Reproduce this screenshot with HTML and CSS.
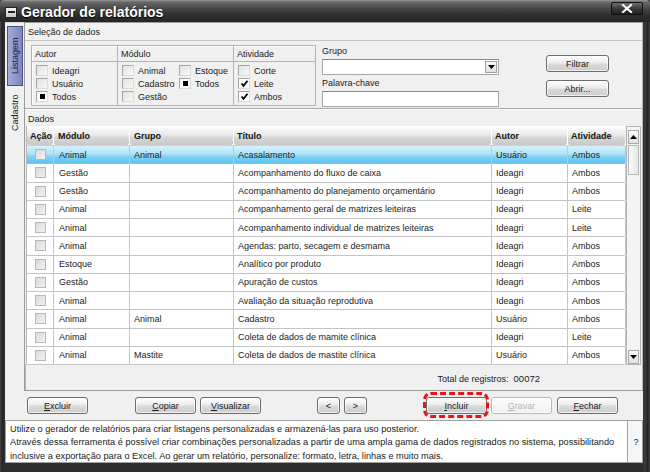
FILE: index.html
```html
<!DOCTYPE html>
<html lang="pt">
<head>
<meta charset="utf-8">
<title>Gerador de relatórios</title>
<link rel="stylesheet" href="styles.css">
</head>
<body>
<div class="window">
  <div class="titlebar">
    <span class="sysicon"><span></span></span>
    <span class="title">Gerador de relatórios</span>
    <span class="close"><svg width="12" height="9" viewBox="0 0 12 9"><path d="M2 1 L10 8 M10 1 L2 8" stroke="#fff" stroke-width="2.2" stroke-linecap="square"/></svg></span>
  </div>
  <div class="frame">
    <div class="upper">
      <div class="tabs">
        <div class="tab active"><span>Listagem</span></div>
        <div class="tab"><span>Cadastro</span></div>
      </div>
      <div class="page">
        <div class="sec-head">Seleção de dados</div>
        <div class="filters">
          <div class="groupbox">
            <div class="ghead">Autor</div>
            <div class="ghead">Módulo</div>
            <div class="ghead">Atividade</div>
            <div class="gbody">
              <div class="opt"><span class="cb"></span>Ideagri</div>
              <div class="opt"><span class="cb"></span>Usuário</div>
              <div class="opt"><span class="cb fill"></span>Todos</div>
            </div>
            <div class="gbody two">
              <div class="opt"><span class="cb"></span>Animal</div>
              <div class="opt"><span class="cb"></span>Estoque</div>
              <div class="opt"><span class="cb"></span>Cadastro</div>
              <div class="opt"><span class="cb fill"></span>Todos</div>
              <div class="opt"><span class="cb"></span>Gestão</div>
            </div>
            <div class="gbody">
              <div class="opt"><span class="cb"></span>Corte</div>
              <div class="opt"><span class="cb on"><svg width="9" height="9" viewBox="0 0 9 9"><path d="M1.5 4.5 L3.5 6.8 L7.5 1.8" fill="none" stroke="#000" stroke-width="1.7"/></svg></span>Leite</div>
              <div class="opt"><span class="cb on"><svg width="9" height="9" viewBox="0 0 9 9"><path d="M1.5 4.5 L3.5 6.8 L7.5 1.8" fill="none" stroke="#000" stroke-width="1.7"/></svg></span>Ambos</div>
            </div>
          </div>
          <div class="fields">
            <div class="flabel">Grupo</div>
            <div class="select"><span class="drop"><svg width="7" height="4" viewBox="0 0 7 4"><path d="M0 0 H7 L3.5 4 Z" fill="#000"/></svg></span></div>
            <div class="flabel">Palavra-chave</div>
            <div class="input"></div>
          </div>
          <div class="fbuttons">
            <span class="btn">Filtrar</span>
            <span class="btn">Abrir...</span>
          </div>
        </div>
        <div class="sec-head2">Dados</div>
        <div class="grid">
          <div class="table">
            <div class="hrow">
              <div class="hc">Ação</div><div class="hc">Módulo</div><div class="hc">Grupo</div><div class="hc">Título</div><div class="hc">Autor</div><div class="hc">Atividade</div>
            </div>
            <div class="row sel"><div class="c ck"><span class="rcb"></span></div><div class="c">Animal</div><div class="c">Animal</div><div class="c">Acasalamento</div><div class="c">Usuário</div><div class="c">Ambos</div></div>
            <div class="row"><div class="c ck"><span class="rcb"></span></div><div class="c">Gestão</div><div class="c"></div><div class="c">Acompanhamento do fluxo de caixa</div><div class="c">Ideagri</div><div class="c">Ambos</div></div>
            <div class="row"><div class="c ck"><span class="rcb"></span></div><div class="c">Gestão</div><div class="c"></div><div class="c">Acompanhamento do planejamento orçamentário</div><div class="c">Ideagri</div><div class="c">Ambos</div></div>
            <div class="row"><div class="c ck"><span class="rcb"></span></div><div class="c">Animal</div><div class="c"></div><div class="c">Acompanhamento geral de matrizes leiteiras</div><div class="c">Ideagri</div><div class="c">Leite</div></div>
            <div class="row"><div class="c ck"><span class="rcb"></span></div><div class="c">Animal</div><div class="c"></div><div class="c">Acompanhamento individual de matrizes leiteiras</div><div class="c">Ideagri</div><div class="c">Leite</div></div>
            <div class="row"><div class="c ck"><span class="rcb"></span></div><div class="c">Animal</div><div class="c"></div><div class="c">Agendas: parto, secagem e desmama</div><div class="c">Ideagri</div><div class="c">Ambos</div></div>
            <div class="row"><div class="c ck"><span class="rcb"></span></div><div class="c">Estoque</div><div class="c"></div><div class="c">Analítico por produto</div><div class="c">Ideagri</div><div class="c">Ambos</div></div>
            <div class="row"><div class="c ck"><span class="rcb"></span></div><div class="c">Gestão</div><div class="c"></div><div class="c">Apuração de custos</div><div class="c">Ideagri</div><div class="c">Ambos</div></div>
            <div class="row"><div class="c ck"><span class="rcb"></span></div><div class="c">Animal</div><div class="c"></div><div class="c">Avaliação da situação reprodutiva</div><div class="c">Ideagri</div><div class="c">Ambos</div></div>
            <div class="row"><div class="c ck"><span class="rcb"></span></div><div class="c">Animal</div><div class="c">Animal</div><div class="c">Cadastro</div><div class="c">Usuário</div><div class="c">Ambos</div></div>
            <div class="row"><div class="c ck"><span class="rcb"></span></div><div class="c">Animal</div><div class="c"></div><div class="c">Coleta de dados de mamite clínica</div><div class="c">Ideagri</div><div class="c">Leite</div></div>
            <div class="row"><div class="c ck"><span class="rcb"></span></div><div class="c">Animal</div><div class="c">Mastite</div><div class="c">Coleta de dados de mastite clínica</div><div class="c">Usuário</div><div class="c">Ambos</div></div>
          </div>
          <div class="vscroll">
            <span class="sbtn"><svg width="7" height="4" viewBox="0 0 7 4"><path d="M0 4 H7 L3.5 0 Z" fill="#000"/></svg></span>
            <span class="thumb"></span>
            <span class="track"></span>
            <span class="sbtn"><svg width="7" height="4" viewBox="0 0 7 4"><path d="M0 0 H7 L3.5 4 Z" fill="#000"/></svg></span>
          </div>
        </div>
        <div class="total"><span>Total de registros:</span><span class="num">00072</span></div>
      </div>
    </div>
    <div class="actions">
      <span class="btn"><u>E</u>xcluir</span>
      <span class="btn gap-a"><u>C</u>opiar</span>
      <span class="btn"><u>V</u>isualizar</span>
      <span class="btn small gap-b">&lt;</span>
      <span class="btn small">&gt;</span>
      <span class="btn gap-c highlight"><u>I</u>ncluir</span>
      <span class="btn disabled"><u>G</u>ravar</span>
      <span class="btn gap-d"><u>F</u>echar</span>
    </div>
    <div class="info">
      <div class="info-text">Utilize o gerador de relatórios para criar listagens personalizadas e armazená-las para uso posterior.<br>Através dessa ferramenta é possível criar combinações personalizadas a partir de uma ampla gama de dados registrados no sistema, possibilitando<br>inclusive a exportação para o Excel. Ao gerar um relatório, personalize: formato, letra, linhas e muito mais.</div>
      <div class="help">?</div>
    </div>
  </div>
</div>
</body>
</html>
```

FILE: styles.css
```css
* { box-sizing: border-box; }
html, body { margin: 0; padding: 0; }
body {
  width: 650px;
  height: 472px;
  overflow: hidden;
  background: #2b2b2b;
  font-family: "Liberation Sans", Arial, sans-serif;
  font-size: 9px;
  color: #1b1b1b;
}
.window {
  width: 650px;
  height: 472px;
  display: flex;
  flex-direction: column;
  background: linear-gradient(to right, #4a4a4a 0, #242424 2px, #2e2e2e 4px, #2e2e2e 643px, #3c3c3c 645px, #202020 648px, #4a4a4a 650px);
}
.titlebar {
  height: 22px;
  flex: none;
  display: flex;
  align-items: center;
  padding-left: 5px;
  background: linear-gradient(#9a9a9a 0, #6a6a6a 2px, #454545 9px, #2e2e2e 15px, #262626 22px);
  border-radius: 4px 4px 0 0;
}
.sysicon {
  width: 12px;
  height: 11px;
  border: 1px solid #222;
  background: linear-gradient(#f4f4f4, #c8c8c8);
  display: flex;
  align-items: center;
  justify-content: center;
  margin-top: 2px;
}
.sysicon span {
  width: 7px;
  height: 2px;
  background: #222;
}
.title {
  color: #fff;
  font-weight: bold;
  font-size: 14px;
  margin-left: 4px;
  margin-top: 1px;
  text-shadow: 0 1px 1px #000;
}
.close {
  margin-left: auto;
  margin-right: 7px;
  margin-top: -6px;
  width: 32px;
  height: 13px;
  border: 1px solid #111;
  border-radius: 2px;
  background: linear-gradient(#707070, #3a3a3a 50%, #202020);
  display: flex;
  align-items: center;
  justify-content: center;
}
.frame {
  flex: 1;
  display: flex;
  flex-direction: column;
  margin: 0 7px 9px 5px;
  background: #f0f0f0;
}
.upper {
  height: 369px;
  display: flex;
}
.tabs {
  width: 19px;
  display: flex;
  flex-direction: column;
  align-items: center;
  padding-top: 3px;
  border-top: 1px solid #d8d8d8;
}
.tab {
  writing-mode: vertical-rl;
  transform: rotate(180deg);
  display: flex;
  align-items: center;
  justify-content: center;
  width: 16px;
  color: #222;
  font-size: 9px;
}
.tab.active {
  height: 60px;
  background: linear-gradient(to left, #a3abd8, #7d87c0);
  border: 1px solid #4b5080;
  color: #1d2040;
  margin-left: 1px;
}
.tab + .tab {
  height: 46px;
  margin-top: 4px;
}
.page {
  flex: 1;
  display: flex;
  flex-direction: column;
  border: 1px solid #9c9c9c;
  border-right-color: #b8b8b8;
}
.sec-head {
  height: 18px;
  padding-left: 3px;
  display: flex;
  align-items: center;
  border-bottom: 1px solid #c4c4c4;
  background: #f2f2f2;
}
.filters {
  height: 68px;
  display: flex;
  align-items: flex-start;
  border-bottom: 1px solid #a8a8a8;
  box-shadow: 0 1px 0 #fff;
}
.groupbox {
  margin: 4px 0 0 6px;
  width: 285px;
  height: 61px;
  display: grid;
  grid-template-columns: 86px 116px 1fr;
  grid-template-rows: 16px 1fr;
  border: 1px solid #b4b4b4;
  box-shadow: inset 1px 1px 0 #fff;
}
.ghead {
  padding-left: 3px;
  display: flex;
  align-items: center;
  border-bottom: 1px solid #b4b4b4;
  border-right: 1px solid #b4b4b4;
}
.ghead:nth-child(3), .gbody:nth-child(6) { border-right: none; }
.gbody {
  border-right: 1px solid #b4b4b4;
  padding: 3px 0 0 4px;
  display: flex;
  flex-direction: column;
  gap: 2px;
}
.gbody.two {
  display: grid;
  grid-template-columns: 55px 1fr;
  grid-auto-rows: 11px;
  row-gap: 2px;
  padding-left: 4px;
}
.opt {
  height: 11px;
  display: flex;
  align-items: center;
  white-space: nowrap;
}
.cb {
  width: 12px;
  height: 11px;
  margin-right: 4px;
  flex: none;
  border: 1px solid;
  border-color: #a4a4a4 #dcdcdc #dcdcdc #a4a4a4;
  background: linear-gradient(135deg, #e2e2e2, #f8f8f8);
  display: flex;
  align-items: center;
  justify-content: center;
}
.cb.on, .cb.fill { background: #fbfbfb; }
.cb.fill::after {
  content: "";
  width: 5px;
  height: 5px;
  background: #000;
}
.fields {
  margin-left: 6px;
  width: 177px;
  display: flex;
  flex-direction: column;
  padding-top: 5px;
}
.flabel {
  height: 13px;
  line-height: 11px;
}
.select, .input {
  height: 16px;
  background: #fff;
  border: 1px solid #a8a8a8;
  border-top-color: #8a8a8a;
}
.select {
  margin-bottom: 3px;
  display: flex;
  justify-content: flex-end;
  align-items: center;
  padding-right: 1px;
}
.drop {
  width: 12px;
  height: 12px;
  border: 1px solid #a0a0a0;
  background: linear-gradient(#fafafa, #dedede);
  display: flex;
  align-items: center;
  justify-content: center;
}
.fbuttons {
  margin-left: 47px;
  padding-top: 14px;
  display: flex;
  flex-direction: column;
  gap: 8px;
}
.btn {
  width: 61px;
  height: 17px;
  display: flex;
  align-items: center;
  justify-content: center;
  border: 1px solid #6c6c6c;
  border-radius: 3px;
  background: linear-gradient(#ffffff, #ececec 45%, #d9d9d9 55%, #cdcdcd);
  box-shadow: inset 0 0 0 1px rgba(255,255,255,0.7);
  color: #1b1b1b;
  white-space: nowrap;
}
.fbuttons .btn { width: 63px; }
.btn u { text-decoration: underline; }
.sec-head2 {
  height: 17px;
  padding-left: 3px;
  display: flex;
  align-items: center;
  padding-top: 3px;
}
.grid {
  display: flex;
  margin-left: 1px;
  height: 239px;
}
.table {
  width: 599px;
  background: #fff;
  border-left: 1px solid #b4b4b4;
}
.hrow {
  height: 20px;
  display: grid;
  grid-template-columns: 27px 76px 104px 258px 76px 58px;
  background: #fff;
  padding-top: 1px;
  border-bottom: 1px solid #d0d0d0;
}
.hc {
  margin-right: 1px;
  border-radius: 2px;
  background: linear-gradient(#fbfbfb, #e8e8e8 45%, #d6d6d6 60%, #c9c9c9);
  font-weight: bold;
  display: flex;
  align-items: center;
  padding-left: 3px;
  color: #111;
}
.hc:nth-child(2), .hc:nth-child(3) { padding-left: 4px; }
.row {
  height: 18.25px;
  display: grid;
  grid-template-columns: 27px 76px 104px 258px 76px 58px;
  border-bottom: 1px solid #c4c4c4;
}
.c {
  border-right: 1px solid #c4c4c4;
  padding-left: 4px;
  display: flex;
  align-items: center;
  white-space: nowrap;
  overflow: hidden;
}
.c:nth-child(2) { padding-left: 5px; }
.c.ck {
  justify-content: center;
  padding-left: 0;
}
.rcb {
  width: 11px;
  height: 11px;
  border: 1px solid #b8b8b8;
  background: linear-gradient(135deg, #dadada, #f2f2f2);
}
.row.sel {
  background: linear-gradient(#d8f1fc, #b2e3f8 45%, #86d2f4 60%, #5cc2ef);
  border-bottom-color: #7cc8e8;
}
.row.sel .c { border-right-color: #9ed6ee; }
.vscroll {
  width: 15px;
  margin-left: 1px;
  display: flex;
  flex-direction: column;
  border: 1px solid #b4b4b4;
  background: #f4f4f4;
  padding: 3px 0 0 0;
}
.sbtn {
  height: 14px;
  margin: 0 1px;
  border: 1px solid #a8a8a8;
  background: linear-gradient(#fdfdfd, #e0e0e0);
  display: flex;
  align-items: center;
  justify-content: center;
  flex: none;
}
.thumb {
  height: 30px;
  margin: 1px 1px 0;
  border: 1px solid #b4b4b4;
  background: linear-gradient(to right, #fafafa, #e6e6e6);
  flex: none;
}
.track { flex: 1; }
.total {
  flex: 1;
  display: flex;
  align-items: center;
  justify-content: flex-end;
  padding-right: 102px;
  padding-top: 2px;
  gap: 5px;
  border-left: 1px solid #b4b4b4;
  margin-left: 0;
}
.total .num { font-size: 9.5px; }
.actions {
  height: 29px;
  display: flex;
  align-items: flex-start;
  padding: 6px 0 0 22px;
  gap: 4px;
}
.btn.small { width: 23px; }
.gap-a { margin-left: 43px; }
.gap-b { margin-left: 52px; }
.gap-c { margin-left: 55px; }
.gap-d { margin-left: 1px; }
.btn.disabled {
  color: #b4b4b4;
  border-color: #b8b8b8;
  background: linear-gradient(#fdfdfd, #f0f0f0);
}
.highlight { position: relative; }
.highlight::after {
  content: "";
  position: absolute;
  left: -4px;
  right: -3px;
  top: -6px;
  bottom: -5px;
  border: 3px dashed #e8141b;
  border-radius: 8px;
}
.info {
  height: 43px;
  display: flex;
}
.info-text {
  flex: 1;
  background: #fff;
  border: 1px solid #a0a0a0;
  padding: 2px 0 0 4px;
  font-size: 9.2px;
  line-height: 13.3px;
  white-space: nowrap;
  overflow: hidden;
}
.help {
  width: 15px;
  border: 1px solid #a0a0a0;
  border-left: none;
  background: #f6f6f6;
  display: flex;
  align-items: center;
  justify-content: center;
  padding-left: 2px;
}
```
